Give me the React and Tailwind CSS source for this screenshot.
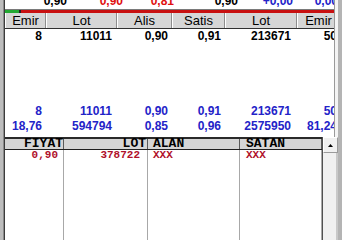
import React from "react";

const cols = [
  { w: "w-[41px]", pr: "pr-[4px]", label: "Emir" },
  { w: "w-[71px]", pr: "pr-[5px]", label: "Lot" },
  { w: "w-[55px]", pr: "pr-[4px]", label: "Alis" },
  { w: "w-[53px]", pr: "pr-[4px]", label: "Satis" },
  { w: "w-[72px]", pr: "pr-[6px]", label: "Lot" },
  { w: "w-[43px]", pr: "pr-[3px]", label: "Emir" },
];

const row1 = ["8", "11011", "0,90", "0,91", "213671", "50"];
const row2 = ["18,76", "594794", "0,85", "0,96", "2575950", "81,24"];

const topVals = [
  { w: "w-[62px]", c: "text-black", t: "0,90" },
  { w: "w-[56px]", c: "text-[#e01010]", t: "0,90" },
  { w: "w-[51px]", c: "text-[#e01010]", t: "0,81" },
  { w: "w-[64px]", c: "text-black", t: "0,90" },
  { w: "w-[55px]", c: "text-[#2323c8]", t: "+0,00" },
  { w: "w-[45px]", c: "text-[#2323c8]", t: "0,00" },
];

function DataRow({ vals, color, h }) {
  return (
    <div className={`flex ${h} text-[12px] font-bold ${color}`}>
      {vals.map((v, i) => (
        <div key={i} className={`${cols[i].w} ${cols[i].pr} shrink-0 text-right`}>
          {v}
        </div>
      ))}
    </div>
  );
}

export default function App() {
  return (
    <div className="w-[342px] h-[240px] bg-[#c0c0c0] flex overflow-hidden font-['Liberation_Sans',Arial,sans-serif]">
      <div className="w-[3px] shrink-0 bg-[#bdbdbd]" />
      <div className="w-[1px] shrink-0 bg-[#8a8a8a]" />
      <div className="w-[1px] shrink-0 bg-[#3c3c3c]" />
      <div className="w-[333px] shrink-0 flex flex-col">
        {/* top part */}
        <div className="flex">
          <div className="w-[330px] shrink-0 flex flex-col bg-white border-r border-[#9a9a9a] overflow-hidden">
            <div className="h-[9px] overflow-hidden flex">
              {topVals.map((v, i) => (
                <div key={i} className={`${v.w} shrink-0 text-right text-[12px] font-bold leading-[12px] mt-[-5px] ${v.c}`}>
                  {v.t}
                </div>
              ))}
            </div>
            <div className="h-[1px] bg-[#7a7a7a]" />
            <div className="h-[3px] flex">
              <div className="w-[14px] bg-[#22a832]" />
              <div className="w-[2px] bg-[#202020]" />
              <div className="flex-1 bg-[#c81010]" />
            </div>
            <div className="flex h-[16px] border-b border-[#303030] bg-[#d6d6d6]">
              {cols.map((c, i) => (
                <div
                  key={i}
                  className={`${c.w} shrink-0 border-l border-white border-r border-r-[#8c8c8c] text-center text-[13px] leading-[15px] text-black`}
                >
                  {c.label}
                </div>
              ))}
            </div>
            <div className="h-[108px] flex flex-col leading-[14px]">
              <DataRow vals={row1} color="text-black" h="h-[14px]" />
              <div className="flex-1" />
              <div className="leading-[15px] pb-[3px]">
                <DataRow vals={row1} color="text-[#2323c8]" h="h-[15px]" />
                <DataRow vals={row2} color="text-[#2323c8]" h="h-[15px]" />
              </div>
            </div>
          </div>
          <div className="w-[3px] shrink-0 bg-[#f4f4f4]" />
        </div>
        {/* bottom part */}
        <div className="flex-1 flex bg-white font-['Liberation_Mono',monospace] font-bold">
          {[
            { w: "w-[59px]", al: "text-right", hp: "pr-[0px]", bp: "pr-[5px]", h: "FIYAT", v: "0,90" },
            { w: "w-[84px]", al: "text-right", hp: "pr-[1px]", bp: "pr-[7px]", h: "LOT", v: "378722" },
            { w: "w-[92px]", al: "text-left", hp: "pl-[5px]", bp: "pl-[5px]", h: "ALAN", v: "XXX" },
            { w: "w-[82px]", al: "text-left", hp: "pl-[6px]", bp: "pl-[6px]", h: "SATAN", v: "XXX" },
          ].map((c, i) => (
            <div key={i} className={`${c.w} shrink-0 flex flex-col`}>
              <div className="border-t-2 border-t-[#2a2a2a] border-b border-b-[#202020] bg-[#d6d6d6]">
                <div className={`h-[10px] leading-[10px] text-[13px] text-black border-r border-r-[#5a5a5a] ${c.al} ${c.hp}`}>
                  {c.h}
                </div>
              </div>
              <div className={`flex-1 border-r border-r-[#a8a8a8] text-[11px] leading-[11px] text-[#b0102a] ${c.al} ${c.bp}`}>
                {c.v}
              </div>
            </div>
          ))}
          <div className="w-[16px] shrink-0 flex flex-col border-l border-[#505050]">
            <div className="h-[16px] bg-[#f0f0f0] border-t border-l border-white border-r border-b border-r-[#9a9a9a] border-b-[#9a9a9a] flex items-center justify-center">
              <svg width="5" height="3" viewBox="0 0 5 3">
                <polygon points="2.5,0 5,3 0,3" fill="#000" />
              </svg>
            </div>
            <div className="flex-1 bg-[#f0f0f0] border-r-2 border-[#c8c8c8]" />
          </div>
        </div>
      </div>
      <div className="w-[4px] shrink-0 bg-[#b4b4b4]" />
    </div>
  );
}
